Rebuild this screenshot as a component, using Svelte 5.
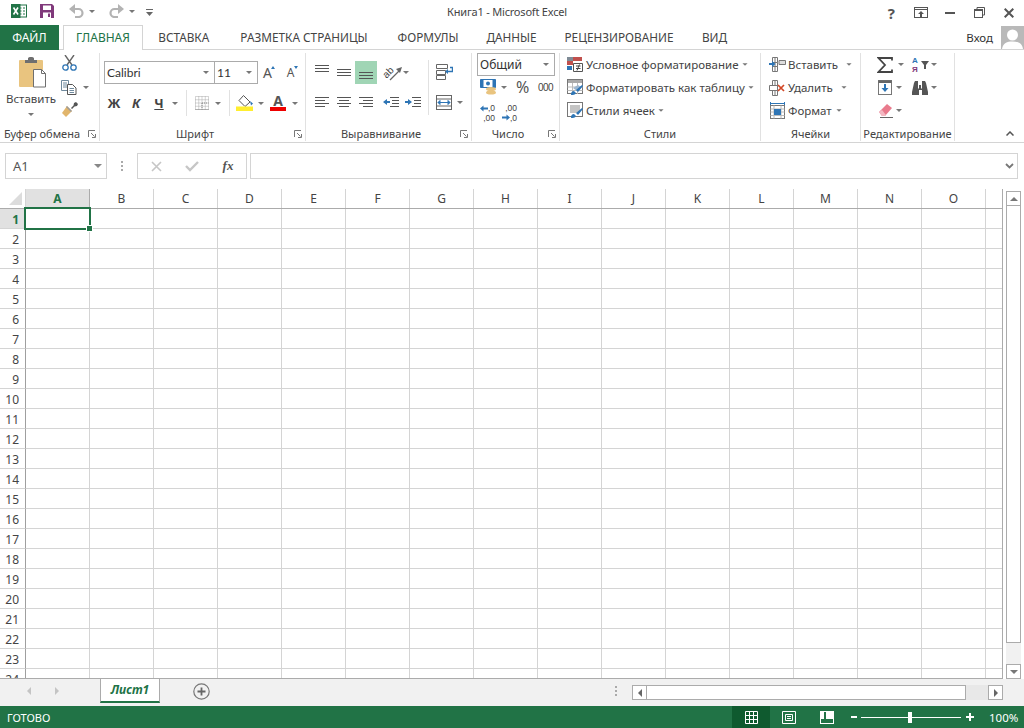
<script>
  const cols = ['A','B','C','D','E','F','G','H','I','J','K','L','M','N','O',''];
  const rows = Array.from({ length: 24 }, (_, i) => i + 1);
  const tabs = [
    { label: 'ГЛАВНАЯ', width: 80 },
    { label: 'ВСТАВКА', width: 81.5 },
    { label: 'РАЗМЕТКА СТРАНИЦЫ', width: 159 },
    { label: 'ФОРМУЛЫ', width: 89 },
    { label: 'ДАННЫЕ', width: 78 },
    { label: 'РЕЦЕНЗИРОВАНИЕ', width: 137 },
    { label: 'ВИД', width: 54 }
  ];
</script>

{#snippet caret()}<i class="caret"></i>{/snippet}
{#snippet launcher()}
  <svg class="launch" width="8" height="8" viewBox="0 0 8 8"><path d="M.5 7V.5H7M3 3l3.5 3.5M7.5 4v3.5H4" fill="none" stroke="#777"/></svg>
{/snippet}
{#snippet lines(kind)}
  <svg width="15" height="11" viewBox="0 0 15 11">
    {#if kind === 'top'}<path d="M0 .5h14M0 3.5h14M0 6.5h14" stroke="#555" fill="none"/>
    {:else if kind === 'mid'}<path d="M0 2.5h14M0 5.5h14M0 8.5h14" stroke="#555" fill="none"/>
    {:else if kind === 'bot'}<path d="M0 4.5h14M0 7.5h14M0 10.5h14" stroke="#555" fill="none"/>
    {:else if kind === 'left'}<path d="M0 .5h14M0 3.5h10M0 6.5h14M0 9.5h10" stroke="#555" fill="none"/>
    {:else if kind === 'center'}<path d="M0 .5h14M2 3.5h10M0 6.5h14M2 9.5h10" stroke="#555" fill="none"/>
    {:else}<path d="M0 .5h14M4 3.5h10M0 6.5h14M4 9.5h10" stroke="#555" fill="none"/>{/if}
  </svg>
{/snippet}

<div class="app">
  <header class="title">
    <div class="qat">
      <svg class="logo" width="16" height="14" viewBox="0 0 16 14">
        <rect x="6.500" y="1" width="9" height="12" fill="#fff" stroke="#217346"/>
        <path d="M8.500 4h2M12 4h2M8.500 7h2M12 7h2M8.500 10h2M12 10h2" stroke="#217346"/>
        <rect width="9.500" height="14" fill="#217346"/>
        <path d="M2.500 3.500l4.500 7M7 3.500l-4.500 7" stroke="#fff" stroke-width="1.600"/>
      </svg>
      <svg class="save" width="14" height="14" viewBox="0 0 14 14">
        <path d="M0 0h12l2 2v12H0z" fill="#80397b"/>
        <rect x="3" y="1.500" width="8" height="4.500" fill="#fff"/>
        <rect x="3" y="8.500" width="8" height="5.500" fill="#fff"/>
        <rect x="8" y="9.500" width="2" height="3.500" fill="#80397b"/>
      </svg>
      <svg class="undo" width="15" height="14" viewBox="0 0 15 14"><path d="M2 5h7.500a4 4 0 0 1 0 8H6" fill="none" stroke="#b3b3b3" stroke-width="2.200"/><path d="M6 0v10L0 5z" fill="#b3b3b3"/></svg>
      <span class="qc1">{@render caret()}</span>
      <svg class="redo" width="15" height="14" viewBox="0 0 15 14"><path d="M13 5H5.500a4 4 0 0 0 0 8H9" fill="none" stroke="#b3b3b3" stroke-width="2.200"/><path d="M9 0v10l6-5z" fill="#b3b3b3"/></svg>
      <span class="qc2">{@render caret()}</span>
      <svg class="custom" width="7" height="8" viewBox="0 0 7 8"><path d="M0 .5h7" stroke="#666"/><path d="M0 3h7L3.500 7z" fill="#666"/></svg>
    </div>
    <div class="doc">Книга1 - Microsoft Excel</div>
    <div class="win">
      <span class="help">?</span>
      <svg class="opt" width="14" height="11" viewBox="0 0 14 11"><rect x=".5" y=".5" width="13" height="10" fill="none" stroke="#555"/><path d="M.5 2.500h13" stroke="#555"/><path d="M7 4l3 3H8v3H6V7H4z" fill="#555"/></svg>
      <svg class="min" width="10" height="2" viewBox="0 0 10 2"><rect width="10" height="2" fill="#555"/></svg>
      <svg class="max" width="11" height="11" viewBox="0 0 11 11"><path d="M3 2.500V.5h7.500V8H8.500" fill="none" stroke="#555"/><rect x=".5" y="2.500" width="8" height="8" fill="none" stroke="#555"/><path d="M0 3.500h9" stroke="#555"/></svg>
      <svg class="close" width="10" height="10" viewBox="0 0 10 10"><path d="M.7.7l8.600 8.600M9.300.7L.7 9.300" stroke="#555" stroke-width="2"/></svg>
    </div>
  </header>

  <nav class="tabs">
    <div class="file">ФАЙЛ</div>
    {#each tabs as t, i}
      <div class="tab" class:on={i === 0} style="width:{t.width}px">{t.label}</div>
    {/each}
    <div class="user">
      <span>Вход</span>
      <svg width="23" height="23" viewBox="0 0 23 23"><rect width="23" height="23" fill="#b9b9b9"/><circle cx="11.500" cy="9" r="5.500" fill="#fff"/><path d="M1 23c1-6 5-7.500 10.500-7.500S21 17 22 23z" fill="#fff"/></svg>
    </div>
  </nav>

  <section class="ribbon">
    <div class="group g-clip">
      <div class="body clip">
        <div class="paste">
          <svg width="29" height="31" viewBox="0 0 29 31">
            <rect x="1" y="3" width="24" height="27" rx="1" fill="#e9c47f"/>
            <path d="M7 6V3h3V1.500C10 .5 11 0 13 0s3 .5 3 1.500V3h3v3z" fill="#6f6f6f"/>
            <path d="M15.500 12.500h8l4 4v13.500h-12z" fill="#fff" stroke="#6f6f6f"/>
            <path d="M23.500 12.500v4h4" fill="none" stroke="#6f6f6f"/>
          </svg>
          <span class="paste-l">Вставить</span>
          {@render caret()}
        </div>
        <div class="clip-side">
          <svg width="15" height="16" viewBox="0 0 15 16">
            <path d="M3 0l7 10M12 0L5 10" stroke="#666" stroke-width="1.400" fill="none"/>
            <circle cx="3.500" cy="12.500" r="2.700" fill="none" stroke="#2e75b5" stroke-width="1.300"/>
            <circle cx="11.500" cy="12.500" r="2.700" fill="none" stroke="#2e75b5" stroke-width="1.300"/>
          </svg>
          <div class="copy">
            <svg width="16" height="15" viewBox="0 0 16 15">
              <path d="M.5.5h7v10h-7z" fill="#fff" stroke="#6f8a9e"/>
              <path d="M2 3h4M2 5h4M2 7h4" stroke="#6f8a9e"/>
              <path d="M6.500 4.500h5l3.500 3.500v6.500H6.500z" fill="#fff" stroke="#555"/>
              <path d="M8.500 8.500h4.500M8.500 10.500h4.500M8.500 12.500h4.500" stroke="#6f8a9e"/>
            </svg>
            {@render caret()}
          </div>
          <svg width="16" height="15" viewBox="0 0 16 15">
            <path d="M9 6l2.500-2.500L12 1l2-1 2 2-1 2-2.500.500L10 7z" fill="#555"/>
            <path d="M0 11l5-7 5 5-6 6z" fill="#e1b56c"/>
            <path d="M5 4l5 5-1 1-5-5z" fill="#9b9b9b"/>
          </svg>
        </div>
      </div>
      <div class="foot"><span>Буфер обмена</span><b>{@render launcher()}</b></div>
    </div>

    <div class="group g-font">
      <div class="body">
        <div class="font-a">
          <div class="combo c-name"><span>Calibri</span>{@render caret()}</div>
          <div class="combo c-size"><span>11</span>{@render caret()}</div>
          <span class="grow big">A<i class="up"></i></span>
          <span class="grow small">A<i class="down"></i></span>
        </div>
        <div class="font-b">
          <span class="bold">Ж</span>
          <span class="ital">К</span>
          <span class="under">Ч</span>
          {@render caret()}
          <i class="vsep"></i>
          <svg width="14" height="14" viewBox="0 0 14 14"><path d="M.5.5h13v13H.5zM7 .5v13M.5 7h13M3.750.5v13M10.250.5v13M.5 3.750h13M.5 10.250h13" fill="none" stroke="#aaa" stroke-dasharray="1 1"/><path d="M.5 13.500h13M7 7v6.500M7 7h6.500" stroke="#888" fill="none" stroke-dasharray="1 1"/></svg>
          {@render caret()}
          <i class="vsep"></i>
          <svg width="18" height="16" viewBox="0 0 18 16"><path d="M7.500.500l6.500 6.500-5 4.500-6-6z" fill="#fff" stroke="#555"/><path d="M14 6l3 2.500-2 2z" fill="#2e75b5"/><rect y="11.500" width="17" height="4.500" fill="#ffee2f"/></svg>
          {@render caret()}
          <span class="fcolor">A</span>
          {@render caret()}
        </div>
      </div>
      <div class="foot"><span>Шрифт</span><b>{@render launcher()}</b></div>
    </div>

    <div class="group g-align">
      <div class="body align">
        <div class="al-main">
          <div class="al-a">
            {@render lines('top')}
            {@render lines('mid')}
            <span class="hi">{@render lines('bot')}</span>
            <svg class="orient" width="20" height="20" viewBox="0 0 20 20">
              <path d="M7 17L17 7" stroke="#666" stroke-width="1.200"/>
              <path d="M13 6l6-2-2 6z" fill="#666"/>
              <text x="0" y="13" font-size="10" font-family="Liberation Sans" fill="#444" transform="rotate(-45 5 10)">ab</text>
            </svg>
            {@render caret()}
          </div>
          <div class="al-b">
            {@render lines('left')}
            {@render lines('center')}
            {@render lines('right')}
            <svg width="16" height="11" viewBox="0 0 16 11"><path d="M7 .5h9M9 3.500h7M9 6.500h7M7 9.500h9" stroke="#555" fill="none"/><path d="M0 5l4-3v2h3v2H4v2z" fill="#2e75b5"/></svg>
            <svg width="16" height="11" viewBox="0 0 16 11"><path d="M7 .5h9M9 3.500h7M9 6.500h7M7 9.500h9" stroke="#555" fill="none"/><path d="M7 5L3 2v2H0v2h3v2z" fill="#2e75b5"/></svg>
          </div>
        </div>
        <i class="vsep tall"></i>
        <div class="al-side">
          <svg width="17" height="16" viewBox="0 0 17 16"><path d="M.5.500h11v4H.5zM.5 6.500h9v4H.5zM.5 11.500h9v4H.5z" fill="#fff" stroke="#666"/><path d="M14 3.500h2.500v4H11" fill="none" stroke="#2e75b5" stroke-width="1.400"/><path d="M12 5v5l-3-2.500z" fill="#2e75b5"/></svg>
          <div class="merge">
            <svg width="16" height="15" viewBox="0 0 16 15"><rect x=".5" y=".5" width="15" height="14" fill="#fff" stroke="#666"/><path d="M.5 4h15M.5 11h15" stroke="#666"/><path d="M2 7.500h12M2 7.500l2-2v4zM14 7.500l-2-2v4z" stroke="#2e75b5" fill="#2e75b5"/></svg>
            {@render caret()}
          </div>
        </div>
      </div>
      <div class="foot"><span>Выравнивание</span><b>{@render launcher()}</b></div>
    </div>

    <div class="group g-num">
      <div class="body">
        <div class="combo c-fmt"><span>Общий</span>{@render caret()}</div>
        <div class="num-a">
          <svg width="18" height="16" viewBox="0 0 18 16"><path d="M.5.5h15v8H.5z" fill="#fff" stroke="#2e75b5"/><rect x=".5" y=".5" width="3" height="8" fill="#2e75b5"/><rect x="12.500" y=".5" width="3" height="8" fill="#2e75b5"/><circle cx="8" cy="4.500" r="2" fill="#2e75b5"/><ellipse cx="11" cy="10" rx="5" ry="2" fill="#e9c47f"/><ellipse cx="11" cy="13.500" rx="5" ry="2" fill="#e9c47f"/></svg>
          {@render caret()}
          <span class="pct">%</span>
          <span class="thou">000</span>
        </div>
        <div class="num-b">
          <span class="dec">
            <svg width="8" height="7" viewBox="0 0 8 7"><path d="M0 3.500l3.500-3v2h4.500v2H3.500v2z" fill="#2e75b5"/></svg>
            <em class="d1">,0</em><em class="d2">,00</em>
          </span>
          <span class="dec">
            <em class="d1">,00</em><em class="d2">,0</em>
            <svg class="arr2" width="8" height="7" viewBox="0 0 8 7"><path d="M8 3.500l-3.500-3v2H0v2h4.500v2z" fill="#2e75b5"/></svg>
          </span>
        </div>
      </div>
      <div class="foot"><span>Число</span><b>{@render launcher()}</b></div>
    </div>

    <div class="group g-styles">
      <div class="body list">
        <div class="item">
          <svg width="17" height="16" viewBox="0 0 17 16"><path d="M0 0h6v4H0z" fill="#7f8b96"/><path d="M6 0h9v4H6z" fill="#c0504d"/><path d="M0 4h6v4H0z" fill="#c0504d"/><path d="M0 9h5v4H0z" fill="#2e75b5"/><path d="M6.500 6.500h9v8h-9z" fill="#fff" stroke="#555"/><path d="M9 9h4.500M9 11.500h4.500M10 13.500l2.500-6" stroke="#444" fill="none"/></svg>
          <span>Условное форматирование</span>{@render caret()}
        </div>
        <div class="item">
          <svg width="17" height="17" viewBox="0 0 17 17"><rect x=".5" y=".5" width="15" height="14" fill="#fff" stroke="#777"/><rect x="1" y="1" width="14" height="3" fill="#aaa"/><path d="M.5 8h15M.5 11.500h15M5.500 4v11M10.500 4v11" stroke="#bbb"/><path d="M6 9l5-3 3 2-4 4z" fill="#9db7cf"/><path d="M4 16c0-3 1-4 3-4l2 2c-1 2-3 2-5 2zM9 11l6-5 1 1-5 6z" fill="#2e75b5"/></svg>
          <span>Форматировать как таблицу</span>{@render caret()}
        </div>
        <div class="item">
          <svg width="17" height="17" viewBox="0 0 17 17"><rect x=".5" y=".5" width="15" height="14" fill="#fff" stroke="#777"/><path d="M3 3h10v8H3z" fill="#c4c4c4"/><path d="M4 16c0-3 1-4 3-4l2 2c-1 2-3 2-5 2zM9 11l6-5 1 1-5 6z" fill="#2e75b5"/></svg>
          <span>Стили ячеек</span>{@render caret()}
        </div>
      </div>
      <div class="foot"><span>Стили</span></div>
    </div>

    <div class="group g-cells">
      <div class="body list">
        <div class="item cell">
          <svg width="17" height="16" viewBox="0 0 17 16"><path d="M3.500.5h5v5h-5zM3.500 5.500v4h5v-4M3.500 9.500h5v5h-5zM6 .5v14" fill="#fff" stroke="#777"/><path d="M10 3.500h6.500v4H10z" fill="#ddd" stroke="#777"/><path d="M0 6h3V4l3.500 3L3 10V8H0z" fill="#2e75b5"/></svg>
          <span>Вставить</span>{@render caret()}
        </div>
        <div class="item cell">
          <svg width="17" height="16" viewBox="0 0 17 16"><path d="M3.500.5h5v5h-5zM.5 5.500h8v5h-8zM3.500 10.500h5v5h-5zM6 .5v5M6 10.500v5" fill="#fff" stroke="#777"/><path d="M9 5l6 6M15 5l-6 6" stroke="#d24726" stroke-width="1.700"/></svg>
          <span>Удалить</span>{@render caret()}
        </div>
        <div class="item cell short">
          <svg width="17" height="17" viewBox="0 0 17 17"><path d="M1.500 0v3M15.500 0v3M1.500 1.500h14" stroke="#2e75b5" fill="none"/><rect x="1.500" y="3.500" width="14" height="13" fill="#fff" stroke="#777"/><path d="M1.500 7h14M1.500 10h14M1.500 13.500h14M5 3.500v13M12 3.500v13" stroke="#bbb"/><rect x="5" y="7" width="7" height="6" fill="#2e75b5"/></svg>
          <span>Формат</span>{@render caret()}
        </div>
      </div>
      <div class="foot"><span>Ячейки</span></div>
    </div>

    <div class="group g-edit">
      <div class="body">
        <div class="ed-a">
          <svg width="16" height="16" viewBox="0 0 16 16"><path d="M15 3.500V1H1.500L8 8l-6.500 7H15v-2.500" fill="none" stroke="#444" stroke-width="1.800"/></svg>
          {@render caret()}
          <span class="sort"><em class="az">А</em><em class="ya">Я</em></span>
          <svg width="8" height="8" viewBox="0 0 8 8"><path d="M0 0h8L5 4v4H3V4z" fill="#555"/></svg>
          {@render caret()}
        </div>
        <div class="ed-a ed-b">
          <svg class="fill" width="14" height="15" viewBox="0 0 14 15"><rect x=".5" y=".5" width="13" height="14" fill="#fff" stroke="#777"/><rect x=".5" y=".5" width="13" height="2.500" fill="#666"/><path d="M6 4h2v4h2.500L7 12 3.500 8H6z" fill="#2e75b5"/></svg>
          {@render caret()}
          <svg class="bino" width="16" height="14" viewBox="0 0 16 14"><path d="M2 2l1-2h3v7l1 1V4h2v4l1-1V0h3l1 2 2 9v3h-6V9H7v5H0v-3z" fill="#555"/></svg>
          {@render caret()}
        </div>
        <div class="ed-c">
          <svg width="15" height="15" viewBox="0 0 15 15"><path d="M1 9l8-8 5 4-7 8H4z" fill="#e97b8d"/><path d="M1 9l3 4h3l1-1-4-5z" fill="#f3b8c2"/><path d="M2 14.500h13" stroke="#666"/></svg>
          {@render caret()}
        </div>
      </div>
      <div class="foot"><span>Редактирование</span></div>
    </div>

    <div class="collapse">
      <svg width="8" height="5" viewBox="0 0 8 5"><path d="M.5 4.500L4 1l3.500 3.500" fill="none" stroke="#555" stroke-width="1.500"/></svg>
    </div>
  </section>

  <div class="fbar">
    <div class="namebox"><span>A1</span><i class="caret dark"></i></div>
    <div class="vdots"><i></i><i></i><i></i></div>
    <div class="fbtns">
      <svg width="11" height="11" viewBox="0 0 11 11"><path d="M1 1l9 9M10 1l-9 9" stroke="#c6c6c6" stroke-width="1.600"/></svg>
      <svg width="14" height="11" viewBox="0 0 14 11"><path d="M1 5l4 4 8-8" stroke="#c6c6c6" stroke-width="2.400" fill="none"/></svg>
      <span class="fx">fx</span>
    </div>
    <div class="finput">
      <svg width="9" height="6" viewBox="0 0 9 6"><path d="M1 1l3.500 3.500L8 1" fill="none" stroke="#777" stroke-width="1.800"/></svg>
    </div>
  </div>

  <main class="sheet">
    <div class="grid">
      <div class="hrow">
        <div class="corner"><svg width="13" height="13" viewBox="0 0 13 13"><path d="M13 0v13H0z" fill="#dcdcdc"/></svg></div>
        {#each cols as c, i}<div class="hcol" class:sel={i === 0}>{c}</div>{/each}
      </div>
      {#each rows as r}
        <div class="row">
          <div class="rhead" class:sel={r === 1}>{r}</div>
          {#each cols as c}<div class="cell-g"></div>{/each}
        </div>
      {/each}
      <div class="active"><i></i></div>
    </div>
    <div class="vscroll">
      <div class="sbtn"><i class="tri-up"></i></div>
      <div class="vthumb"></div>
      <div class="vtrack"></div>
      <div class="sbtn"><i class="caret"></i></div>
    </div>
  </main>

  <div class="tabsbar">
    <div class="nav">
      <i class="tri-l"></i><i class="tri-r"></i>
    </div>
    <div class="sheet-tab">Лист1</div>
    <svg class="add" width="17" height="17" viewBox="0 0 17 17"><circle cx="8.500" cy="8.500" r="7.700" fill="none" stroke="#777" stroke-width="1.200"/><path d="M8.500 4.500v8M4.500 8.500h8" stroke="#666" stroke-width="1.800"/></svg>
    <div class="hdots"><i></i><i></i><i></i></div>
    <div class="hscroll">
      <div class="hbtn"><i class="tri-l dark"></i></div>
      <div class="hthumb"></div>
      <div class="htrack"></div>
      <div class="hbtn end"><i class="tri-r dark"></i></div>
    </div>
  </div>

  <footer class="status">
    <span class="ready">ГОТОВО</span>
    <div class="views">
      <div class="view on">
        <svg width="13" height="13" viewBox="0 0 13 13"><path d="M.5.5h12v12H.5zM4.500.5v12M8.500.5v12M.5 4.500h12M.5 8.500h12" fill="none" stroke="#fff"/></svg>
      </div>
      <div class="view">
        <svg width="14" height="13" viewBox="0 0 14 13"><path d="M.5.5h13v12H.5z" fill="none" stroke="#fff"/><path d="M3.500 3.500h7v6h-7zM5 5.500h4M5 7.500h4" fill="none" stroke="#fff"/></svg>
      </div>
      <div class="view">
        <svg width="14" height="13" viewBox="0 0 14 13"><rect x=".5" y=".5" width="13" height="12" fill="none" stroke="#fff"/><rect x="1" y="1" width="3" height="7" fill="#fff"/><rect x="6" y="1" width="7" height="7" fill="#fff"/></svg>
      </div>
    </div>
    <div class="zoom">
      <i class="minus"></i>
      <div class="slider"><i></i></div>
      <svg width="8" height="8" viewBox="0 0 8 8"><path d="M4 0v8M0 4h8" stroke="#fff" stroke-width="2"/></svg>
      <span>100%</span>
    </div>
  </footer>
</div>

<style>
  :global(body) { margin: 0; }
  .app {
    width: 1024px; height: 728px; overflow: hidden; background: #fff;
    font: 12px "Noto Sans", "Open Sans", sans-serif; color: #444;
    display: flex; flex-direction: column;
  }
  em { font-style: normal; }

  .title { height: 25px; display: flex; align-items: center; position: relative; flex: none; }
  .qat { display: flex; align-items: center; margin-left: 11px; }
  .logo { margin-top: -3px; }
  .save { margin-left: 13px; margin-top: -3px; }
  .undo { margin-left: 15px; margin-top: -3px; }
  .qc1 { margin-left: 5px; margin-top: -3px; display: flex; }
  .redo { margin-left: 14px; margin-top: -3px; }
  .qc2 { margin-left: 5px; margin-top: -3px; display: flex; }
  .custom { margin-left: 11px; }
  .doc { position: absolute; left: 0; right: 10px; text-align: center; top: 4px; color: #444; font-size: 11px; letter-spacing: -.2px; }
  .win { margin-left: auto; display: grid; grid-template-columns: repeat(5, 29.500px); justify-items: center; align-items: center; }
  .help { font-size: 15px; font-weight: 700; color: #555; line-height: 14px; }

  .tabs { height: 25px; display: flex; align-items: stretch; flex: none; border-bottom: 1px solid #d4d4d4; box-sizing: border-box; }
  .file { width: 59px; background: #217346; color: #fff; display: flex; align-items: center; justify-content: center; height: 25px; margin-right: 4px; }
  .tab { line-height: 24px; white-space: nowrap; text-align: center; font-size: 11.800px; flex: none; }
  .tab.on { color: #217346; background: #fff; border: 1px solid #d4d4d4; border-bottom: 0; height: 25px; box-sizing: border-box; line-height: 23px; font-size: 12px; }
  .user { margin-left: auto; display: flex; align-items: center; gap: 8px; }
  .user span { color: #333; font-size: 11.500px; }
  .user svg { display: block; }

  .ribbon { display: flex; flex: none; padding-top: 3px; box-sizing: border-box; border-bottom: 1px solid #d4d4d4; height: 93px; }
  .group { display: flex; flex-direction: column; height: 88px; border-right: 1px solid #e1e1e1; box-sizing: border-box; flex: none; }
  .body { flex: 1; min-height: 0; box-sizing: border-box; }
  .foot { height: 15px; display: flex; align-items: center; flex: none; font-size: 11px; letter-spacing: 0; }
  .foot span { flex: 1; text-align: center; line-height: 15px; }
  .foot b { width: 15px; flex: none; display: flex; justify-content: center; }
  .launch { display: block; }
  .caret { display: inline-block; width: 0; height: 0; border: 3px solid transparent; border-top: 3.500px solid #777; border-bottom: 0; flex: none; }
  .vsep { display: block; width: 1px; height: 26px; background: #e1e1e1; }

  .g-clip { width: 100px; }
  .clip { display: flex; }
  .paste { width: 62px; display: flex; flex-direction: column; align-items: center; padding-top: 4px; }
  .paste svg { margin-left: 3px; display: block; }
  .paste-l { margin-top: 3px; line-height: 16px; font-size: 11.500px; }
  .paste .caret { margin-top: 6px; }
  .clip-side { display: flex; flex-direction: column; padding-top: 2px; }
  .clip-side > svg { display: block; }
  .copy { display: flex; align-items: center; gap: 6px; margin: 9px 0 7px -1px; }

  .g-font { width: 206px; }
  .font-a { display: grid; grid-template-columns: 111px 43px 23px 23px; margin: 8px 0 0 4px; align-items: center; height: 23px; }
  .combo { height: 23px; box-sizing: border-box; border: 1px solid #ababab; display: flex; align-items: center; justify-content: space-between; padding: 0 5px 0 2px; background: #fff; color: #333; }
  .c-size { border-left: 0; }
  .c-name span, .c-size span { font-family: Lato, "Noto Sans", sans-serif; font-size: 12px; }
  .grow { display: block; justify-self: center; position: relative; color: #555; line-height: 14px; margin-right: 4px; }
  .grow.big { font-size: 14px; }
  .grow.small { font-size: 12px; }
  .up, .down { position: absolute; left: 100%; top: 0; width: 0; height: 0; border: 2.500px solid transparent; }
  .up { border-bottom: 3px solid #2e75b5; border-top: 0; margin-left: -1px; }
  .down { border-top: 3px solid #2e75b5; border-bottom: 0; }
  .font-b { display: grid; grid-template-columns: 20px 24px 22px 10px 12px 20px 12px 10px 22px 10px 24px 10px; justify-items: center; align-items: center; margin: 6px 0 0 4px; height: 22px; width: 196px; font-size: 13px; color: #444; }
  .bold { font-weight: 700; }
  .ital { font-weight: 700; font-style: italic; }
  .under { font-weight: 700; text-decoration: underline; }
  .fcolor { font-weight: 700; font-size: 14px; line-height: 12px; color: #555; border-bottom: 4px solid #e00; width: 16px; text-align: center; }

  .g-align { width: 166px; }
  .align { display: flex; }
  .al-main { width: 113px; margin-left: 9px; margin-top: 8px; flex: none; }
  .al-a { display: grid; grid-template-columns: 22px 18px 22px 26px 8px; justify-items: center; align-items: center; height: 23px; }
  .al-a > svg:first-child { justify-self: start; margin-top: -4px; }
  .al-a > svg:nth-child(2) { justify-self: start; }
  .al-a .orient { justify-self: end; overflow: visible; }
  .al-a .caret { justify-self: start; }
  .hi { background: #a0d5b5; width: 22px; height: 23px; display: flex; align-items: flex-end; justify-content: center; padding-bottom: 5px; box-sizing: border-box; }
  .hi svg { display: block; }
  .al-b { display: grid; grid-template-columns: 22px 22px 24px 22px 16px; justify-items: start; align-items: center; height: 22px; margin-top: 7px; }
  .tall { height: 55px; margin: 7px 0 0 0; flex: none; }
  .al-side { margin-left: 7px; padding-top: 11px; }
  .al-side > svg { display: block; }
  .merge { display: flex; align-items: center; gap: 5px; margin-top: 15px; }
  .merge svg { display: block; }

  .g-num { width: 88px; }
  .c-fmt { margin: 0 4px 0 5px; color: #333; }
  .num-a { display: grid; grid-template-columns: 21px 15px 22px 24px; align-items: center; justify-items: start; margin: 3px 0 0 8px; height: 16px; }
  .pct { font-size: 16px; line-height: 16px; color: #555; }
  .thou { font: 10px "Liberation Sans", sans-serif; color: #444; letter-spacing: -.5px; }
  .num-b { display: flex; gap: 7px; margin: 9px 0 0 8px; }
  .dec { position: relative; display: block; width: 15px; height: 18px; font: 8.500px/8px "Liberation Sans", sans-serif; color: #444; }
  .dec svg { position: absolute; left: 0; top: 1px; }
  .dec .arr2 { top: 10px; }
  .d1, .d2 { position: absolute; right: 0; }
  .d1 { top: 0; }
  .d2 { top: 10px; }

  .g-styles { width: 201px; }
  .list { padding: 0 0 0 7px; }
  .g-cells .list { padding-left: 8px; }
  .item { display: flex; align-items: center; height: 23px; white-space: nowrap; gap: 2px; font-size: 11.500px; }
  .item svg { flex: none; display: block; }
  .item .caret { margin-left: 1px; transform: scale(.85); }
  .g-cells { width: 100px; }
  .cell .caret { margin-left: 6px; }
  .cell.short .caret { margin-left: 2px; }
  .g-edit { width: 94px; }
  .ed-a { display: grid; grid-template-columns: 21px 14px 9px 10px 10px; justify-items: start; align-items: center; margin-left: 16px; height: 23px; }
  .ed-b { grid-template-columns: 19px 16px 19px 10px; }
  .fill { margin-left: 1px; }
  .bino { display: block; }
  .sort { display: block; width: 9px; height: 18px; font: 700 8px/9px "Liberation Sans", sans-serif; }
  .az { color: #2e75b5; display: block; }
  .ya { color: #80397b; display: block; }
  .ed-c { display: flex; align-items: center; gap: 3px; margin-left: 17px; height: 23px; }
  .collapse { flex: 1; display: flex; align-items: flex-end; justify-content: flex-end; padding: 0 10px 5px 0; height: 88px; box-sizing: border-box; }

  .fbar { height: 46px; flex: none; display: flex; align-items: flex-start; padding: 10px 6px 0 5px; box-sizing: border-box; }
  .namebox { width: 102px; height: 26px; border: 1px solid #d4d4d4; box-sizing: border-box; display: flex; align-items: center; justify-content: space-between; padding: 0 4px 0 7px; font-size: 13px; color: #555; }
  .dark { border-top: 4px solid #888; border-left-width: 4px; border-right-width: 4px; }
  .vdots { width: 30px; height: 26px; display: flex; flex-direction: column; align-items: center; justify-content: center; gap: 2px; }
  .vdots i, .hdots i { width: 2px; height: 2px; background: #aaa; display: block; }
  .fbtns { width: 110px; height: 26px; border: 1px solid #d4d4d4; box-sizing: border-box; display: grid; grid-template-columns: 36px 36px 36px; justify-items: center; align-items: center; }
  .fx { font-family: "Liberation Serif", serif; font-style: italic; font-weight: 700; font-size: 13px; color: #555; }
  .finput { flex: 1; margin-left: 3px; height: 26px; border: 1px solid #d4d4d4; box-sizing: border-box; display: flex; align-items: center; justify-content: flex-end; padding-right: 3px; }

  .sheet { height: 490px; flex: none; display: flex; overflow: hidden; }
  .grid { width: 1003px; height: 490px; flex: none; overflow: hidden; position: relative; border-right: 1px solid #ababab; border-bottom: 1px solid #ababab; box-sizing: border-box; }
  .hrow { display: flex; height: 20px; border-bottom: 1px solid #ababab; box-sizing: border-box; }
  .corner { width: 26px; flex: none; display: flex; justify-content: flex-end; align-items: flex-end; padding: 0 3px 3px 0; box-sizing: border-box; border-right: 1px solid #d4d4d4; }
  .corner svg { display: block; }
  .hcol { width: 64px; flex: none; text-align: center; line-height: 19px; border-right: 1px solid #d4d4d4; box-sizing: border-box; color: #444; }
  .hcol.sel { background: #e1e1e1; color: #217346; font-weight: 700; border-right-color: #ababab; }
  .row { display: flex; height: 20px; }
  .rhead { width: 26px; flex: none; box-sizing: border-box; border-right: 1px solid #9f9f9f; border-bottom: 1px solid #d4d4d4; text-align: right; padding-right: 6px; line-height: 21px; font-size: 12px; color: #444; }
  .rhead.sel { background: #e1e1e1; color: #217346; font-weight: 700; }
  .cell-g { width: 64px; flex: none; box-sizing: border-box; border-right: 1px solid #d4d4d4; border-bottom: 1px solid #d4d4d4; }
  .active { position: absolute; left: 24px; top: 18px; width: 67px; height: 23px; border: 2px solid #217346; box-sizing: border-box; }
  .active i { position: absolute; right: -4px; bottom: -4px; width: 5px; height: 5px; background: #217346; border: 1px solid #fff; }

  .vscroll { flex: 1; display: flex; flex-direction: column; padding: 2px 3px 0 3px; box-sizing: border-box; }
  .sbtn { height: 15px; flex: none; border: 1px solid #ababab; box-sizing: border-box; display: flex; align-items: center; justify-content: center; background: #fff; }
  .tri-up { width: 0; height: 0; border: 4px solid transparent; border-bottom: 4px solid #777; border-top: 0; }
  .sbtn .caret { border-width: 4px; border-bottom: 0; border-top: 4px solid #777; }
  .vthumb { height: 437px; flex: none; border: 1px solid #ababab; border-top: 0; box-sizing: border-box; background: #fff; }
  .vtrack { flex: 1; background: #f1f1f1; }

  .tabsbar { height: 27px; flex: none; background: #f1f1f1; display: flex; align-items: flex-start; }
  .nav { width: 100px; height: 24px; display: flex; align-items: center; gap: 24px; padding-left: 27px; box-sizing: border-box; flex: none; }
  .tri-l, .tri-r { width: 0; height: 0; border: 4px solid transparent; display: block; }
  .tri-l { border-right: 4px solid #c4c4c4; border-left: 0; }
  .tri-r { border-left: 4px solid #c4c4c4; border-right: 0; }
  .dark.tri-l { border-right-color: #666; }
  .dark.tri-r { border-left-color: #666; }
  .sheet-tab { width: 60px; height: 25px; margin-top: -1px; box-sizing: border-box; background: #fff; border: 1px solid #ababab; border-top: 0; border-bottom: 2px solid #217346; text-align: center; font-weight: 700; font-style: italic; color: #217346; line-height: 23px; flex: none; }
  .add { margin: 4px 0 0 33px; flex: none; }
  .hdots { display: flex; flex-direction: column; gap: 2px; margin: 7px 0 0 405px; flex: none; }
  .hscroll { display: flex; height: 15px; margin: 6px 0 0 15px; width: 371px; flex: none; }
  .hbtn { width: 15px; flex: none; border: 1px solid #ababab; box-sizing: border-box; display: flex; align-items: center; justify-content: center; background: #fff; }
  .hthumb { width: 319px; flex: none; background: #fff; border: 1px solid #ababab; border-left: 0; box-sizing: border-box; }
  .htrack { flex: 1; background: #e8e8e8; }

  .status { height: 22px; flex: none; background: #217346; color: #fff; display: flex; align-items: center; }
  .ready { margin-left: 7px; font-size: 11px; }
  .views { margin-left: auto; display: grid; grid-template-columns: 38px 38px 38px; height: 22px; margin-right: 5px; }
  .view { display: flex; align-items: center; justify-content: center; }
  .view.on { background: #0f5a2f; }
  .view svg { display: block; }
  .zoom { display: flex; align-items: center; margin-right: 8px; }
  .minus { width: 6px; height: 2px; background: #fff; display: block; }
  .slider { width: 100px; height: 1px; background: #fff; margin: 0 5px 0 4px; position: relative; }
  .slider i { position: absolute; left: 47px; top: -5px; width: 4px; height: 11px; background: #fff; }
  .zoom span { margin-left: 15px; width: 27px; font-size: 11.500px; }
</style>
